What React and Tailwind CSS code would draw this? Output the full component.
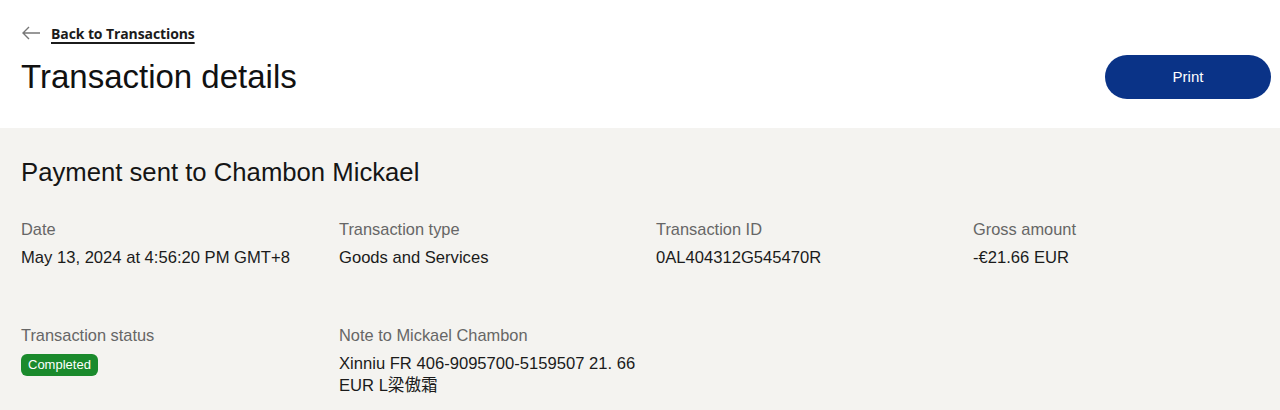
export default function App() {
  const sans = { fontFamily: '"Liberation Sans", Arial, "Noto Sans CJK SC", sans-serif' };
  return (
    <div className="w-[1280px] h-[410px] overflow-hidden bg-white text-[#1b1b1b]" style={sans}>
      <div className="h-[128px] flex justify-between pl-[21px] pr-[9px]">
        <div className="flex flex-col">
          <a className="flex items-center gap-[10px] mt-[24px] h-[18px] text-[#1b1b1b]" href="#">
            <svg width="20" height="14" viewBox="0 0 20 14" fill="none" stroke="#777" strokeWidth="1.4">
              <path d="M19 7H2M8 1L2 7l6 6" />
            </svg>
            <span
              className="text-[14px] font-bold underline underline-offset-[3px] decoration-[1.5px]"
              style={{ fontFamily: '"Open Sans", "Segoe UI", sans-serif', letterSpacing: '-0.1px' }}
            >
              Back to Transactions
            </span>
          </a>
          <h1 className="text-[33px] leading-[38px] mt-[16px] text-[#111]">Transaction details</h1>
        </div>
        <div className="pt-[55px]">
          <button className="w-[166px] h-[44px] rounded-full bg-[#0a3387] text-white text-[15px]">
            Print
          </button>
        </div>
      </div>
      <div className="bg-[#f4f3f0] h-[282px] pl-[21px] pt-[29px]">
        <h2 className="text-[25.7px] leading-[30px] text-[#151515]">Payment sent to Chambon Mickael</h2>
        <div className="grid grid-cols-[318px_317px_317px_300px] mt-[32px]">
          <div>
            <div className="text-[#666] text-[16.4px] leading-[20px]">Date</div>
            <div className="text-[16.6px] leading-[20px] mt-[9px] text-[#1b1b1b]">May 13, 2024 at 4:56:20 PM GMT+8</div>
          </div>
          <div>
            <div className="text-[#666] text-[16.4px] leading-[20px]">Transaction type</div>
            <div className="text-[16.6px] leading-[20px] mt-[9px] text-[#1b1b1b]">Goods and Services</div>
          </div>
          <div>
            <div className="text-[#666] text-[16.4px] leading-[20px]">Transaction ID</div>
            <div className="text-[16.6px] leading-[20px] mt-[9px] text-[#1b1b1b]">0AL404312G545470R</div>
          </div>
          <div>
            <div className="text-[#666] text-[16.4px] leading-[20px]">Gross amount</div>
            <div className="text-[16.6px] leading-[20px] mt-[9px] text-[#1b1b1b]">-€21.66 EUR</div>
          </div>
          <div className="mt-[57px]">
            <div className="text-[#666] text-[16.4px] leading-[20px]">Transaction status</div>
            <span className="inline-flex items-center h-[22px] px-[7px] mt-[9px] rounded-[6px] bg-[#1a8a2c] text-white text-[13px]">
              Completed
            </span>
          </div>
          <div className="mt-[57px] col-span-2">
            <div className="text-[#666] text-[16.4px] leading-[20px]">Note to Mickael Chambon</div>
            <div className="text-[16.6px] leading-[22px] mt-[8px] w-[310px] text-[#1b1b1b]">
              Xinniu FR 406-9095700-5159507 21. 66 EUR L梁傲霜
            </div>
          </div>
        </div>
      </div>
    </div>
  );
}
